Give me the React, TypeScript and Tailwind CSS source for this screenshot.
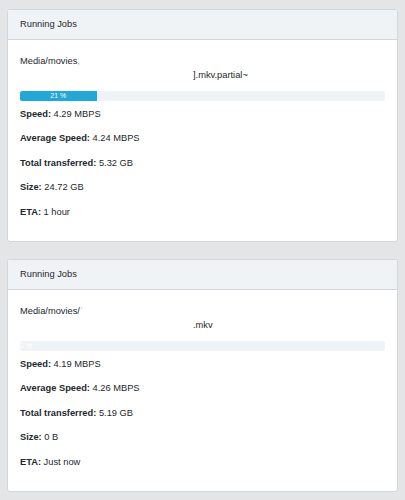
import React from "react";

interface Job {
  pathHead: string;
  pathMark: string;
  fileTail: string;
  percent: number;
  speed: string;
  avgSpeed: string;
  transferred: string;
  size: string;
  eta: string;
}

const jobs: Job[] = [
  {
    pathHead: "Media/movies",
    pathMark: ",",
    fileTail: "].mkv.partial~",
    percent: 21,
    speed: "4.29 MBPS",
    avgSpeed: "4.24 MBPS",
    transferred: "5.32 GB",
    size: "24.72 GB",
    eta: "1 hour",
  },
  {
    pathHead: "Media/movies/",
    pathMark: "\u02C8",
    fileTail: ".mkv",
    percent: 0,
    speed: "4.19 MBPS",
    avgSpeed: "4.26 MBPS",
    transferred: "5.19 GB",
    size: "0 B",
    eta: "Just now",
  },
];

function Stat({ label, value }: { label: string; value: string }) {
  return (
    <p className="mb-[10.4px] leading-[14px]">
      <strong className="font-bold">{label}:</strong> {value}
    </p>
  );
}

function JobCard({ job }: { job: Job }) {
  return (
    <div className="mb-[17px] rounded-[3px] border border-[#d3d7db] bg-white">
      <div className="flex h-[30px] items-center border-b border-[#d3d7db] bg-[#f0f3f5] px-[12px] pt-px">
        Running Jobs
      </div>
      <div className="px-[12px] pb-[12px] pt-[14px]">
        <div className="leading-[14px]">
          {job.pathHead}
          <span className="text-[#9aa0a5]">{job.pathMark}</span>
        </div>
        <div className="pl-[173px] leading-[14px]">{job.fileTail}</div>
        <div className="mb-[6px] mt-[9px] flex h-[10px] overflow-hidden rounded-[2.5px] bg-[#f0f3f5]">
          {job.percent > 0 ? (
            <div
              className="flex items-center justify-center bg-[#20a8d8] text-[7px] text-white"
              style={{ width: `${job.percent}%` }}
            >
              {job.percent} %
            </div>
          ) : (
            <div className="flex items-center text-[7px] text-white">0 %</div>
          )}
        </div>
        <Stat label="Speed" value={job.speed} />
        <Stat label="Average Speed" value={job.avgSpeed} />
        <Stat label="Total transferred" value={job.transferred} />
        <Stat label="Size" value={job.size} />
        <Stat label="ETA" value={job.eta} />
      </div>
    </div>
  );
}

export default function App() {
  return (
    <div className="min-h-[500px] bg-[#e4e5e6] px-[7px] pt-[9px] font-['Liberation_Sans',Arial,sans-serif] text-[9.3px] text-[#23282c]">
      {jobs.map((job, i) => (
        <JobCard key={i} job={job} />
      ))}
    </div>
  );
}
